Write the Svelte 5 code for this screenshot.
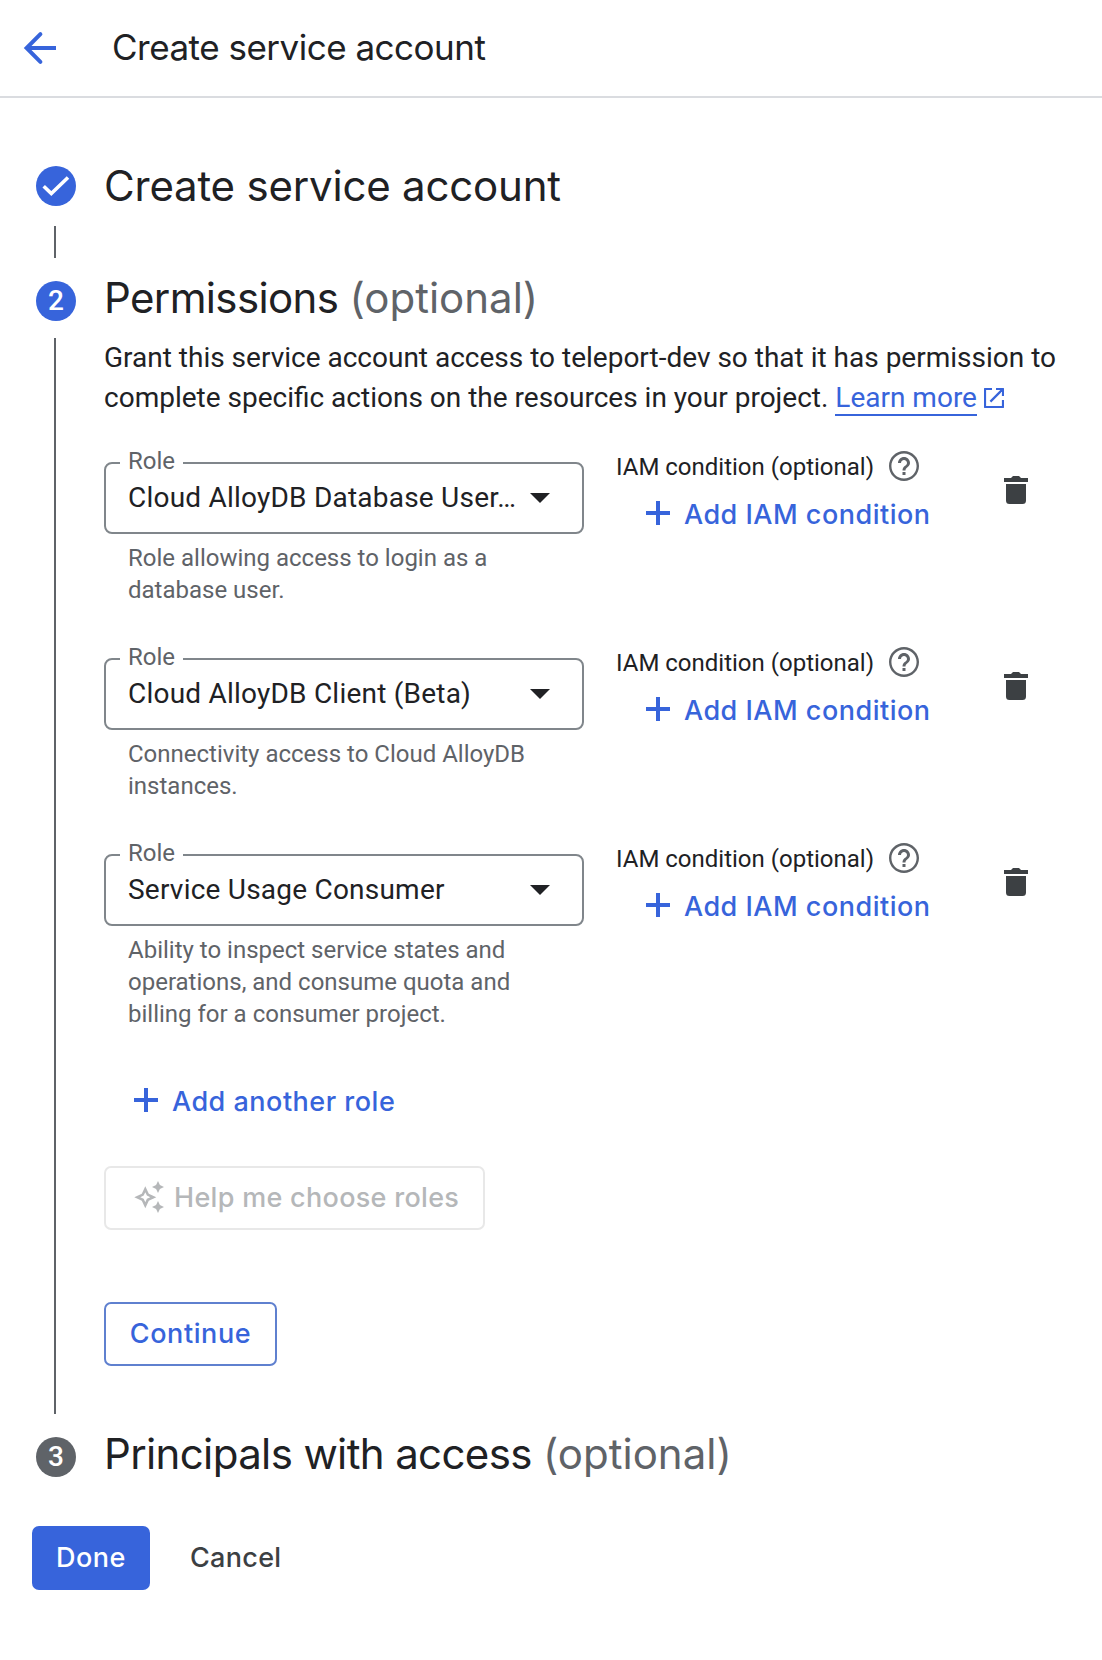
<script>
  const roles = [
    {
      name: 'Cloud AlloyDB Database User…',
      help: ['Role allowing access to login as a', 'database user.']
    },
    {
      name: 'Cloud AlloyDB Client (Beta)',
      help: ['Connectivity access to Cloud AlloyDB', 'instances.']
    },
    {
      name: 'Service Usage Consumer',
      help: [
        'Ability to inspect service states and',
        'operations, and consume quota and',
        'billing for a consumer project.'
      ]
    }
  ];
</script>

{#snippet plus()}
  <svg class="plus" width="24" height="24" viewBox="0 0 24 24" aria-hidden="true">
    <path d="M10 0h4v10h10v4H14v10h-4V14H0v-4h10z" fill="currentColor" />
  </svg>
{/snippet}

<div class="page">
  <header>
    <svg width="48" height="48" viewBox="0 0 24 24" aria-hidden="true">
      <g fill="none" stroke="currentColor" stroke-width="2">
        <path d="M20 12H5.6" />
        <path d="M12.2 5.100 5.300 12l6.900 6.900" stroke-linecap="round" />
      </g>
    </svg>
    <h1>Create service account</h1>
  </header>

  <main>
    <section class="step first">
      <div class="rail">
        <span class="dot">
          <svg width="40" height="40" viewBox="0 0 40 40" aria-hidden="true">
            <path d="M7.700 20.300 15.300 27.500 32 11.500" fill="none" stroke="#fff" stroke-width="3.600" />
          </svg>
        </span>
        <span class="line"></span>
      </div>
      <div class="content"><h2>Create service account</h2></div>
    </section>

    <section class="step second">
      <div class="rail">
        <span class="dot">2</span>
        <span class="line"></span>
      </div>
      <div class="content">
        <h2>Permissions <span class="optional">(optional)</span></h2>
        <p class="intro">
          Grant this service account access to teleport-dev so that it has permission to<br />
          complete specific actions on the resources in your project.
          <a href="#learn">Learn more</a><svg class="external" width="20" height="20" viewBox="0 0 20 20" aria-hidden="true">
            <path d="M8 1H1v18h18v-7M12 1h7v7M18.600 1.400 6.400 13.600" fill="none" stroke="currentColor" stroke-width="2.200" stroke-linejoin="round" />
          </svg>
        </p>

        {#each roles as role}
          <div class="role">
            <div class="field">
              <div class="select">
                <span class="label">Role</span>
                <span class="value">{role.name}</span>
                <svg width="20" height="10" viewBox="0 0 20 10" aria-hidden="true">
                  <path d="M0 0h20L10 10z" fill="currentColor" />
                </svg>
              </div>
              <div class="help">
                {#each role.help as text}<div>{text}</div>{/each}
              </div>
            </div>
            <div class="condition">
              <div class="caption">
                <span>IAM condition (optional)</span>
                <svg width="36" height="36" viewBox="0 0 24 24" aria-hidden="true">
                  <path
                    fill="currentColor"
                    d="M11 18h2v-2h-2v2zm1-16C6.48 2 2 6.48 2 12s4.48 10 10 10 10-4.48 10-10S17.52 2 12 2zm0 18.400c-4.630 0-8.400-3.770-8.400-8.400s3.770-8.400 8.400-8.400 8.400 3.770 8.400 8.400-3.770 8.400-8.400 8.400zm0-14.400c-2.21 0-4 1.79-4 4h2c0-1.1.9-2 2-2s2 .9 2 2c0 2-3 1.75-3 5h2c0-2.25 3-2.5 3-5 0-2.21-1.79-4-4-4z"
                  />
                </svg>
              </div>
              <div class="add">{@render plus()}<span>Add IAM condition</span></div>
            </div>
            <svg class="delete" width="24" height="28" viewBox="0 0 24 28" aria-hidden="true">
              <path
                fill="currentColor"
                d="M0 2h7l2-2h6l2 2h7v4H0zM2 8h20v16.500a3.5 3.5 0 0 1-3.5 3.5h-13A3.5 3.5 0 0 1 2 24.500z"
              />
            </svg>
          </div>
        {/each}

        <div class="add another">{@render plus()}<span>Add another role</span></div>

        <button class="choose" disabled>
          <svg class="sparkle" width="30" height="32" viewBox="0 0 30 32" aria-hidden="true">
            <path
              fill="currentColor"
              fill-rule="evenodd"
              d="M11.300 4.200l3.500 7.500 7.500 3.500-7.500 3.500-3.500 7.500-3.500-7.500-7.500-3.500 7.500-3.500zM11.300 10.200l-1.600 3.400-3.400 1.600 3.400 1.600 1.600 3.400 1.600-3.400 3.400-1.600-3.400-1.600zM24-1l1.900 4.100L30 5l-4.100 1.900L24 11l-1.900-4.100L18 5l4.100-1.900zM24 19l1.900 4.100L30 25l-4.100 1.900L24 31l-1.900-4.100L18 25l4.100-1.900z"
            />
          </svg>
          <span>Help me choose roles</span>
        </button>

        <button class="continue">Continue</button>
      </div>
    </section>

    <section class="step third">
      <div class="rail"><span class="dot gray">3</span></div>
      <div class="content">
        <h2>Principals with access <span class="optional">(optional)</span></h2>
      </div>
    </section>
  </main>

  <footer>
    <button class="done">Done</button>
    <button class="cancel">Cancel</button>
  </footer>
</div>

<style>
  :global(body) {
    background: #fff;
  }
  .page {
    width: 1102px;
    height: 1660px;
    overflow: hidden;
    color: #202124;
    font-family: Roboto, sans-serif;
    box-sizing: border-box;
  }
  svg {
    display: block;
    flex: none;
  }
  header {
    display: flex;
    align-items: center;
    height: 96px;
    padding-left: 16px;
    gap: 48px;
    border-bottom: 2px solid #dadce0;
    color: #3764db;
  }
  h1,
  h2 {
    margin: 0;
    font-family: Inter, sans-serif;
    font-weight: 400;
    color: #202124;
    white-space: nowrap;
  }
  h1 {
    margin-top: -2px;
    font-size: 35px;
    line-height: 48px;
    letter-spacing: -0.5px;
  }
  h2 {
    font-size: 42px;
    line-height: 48px;
    letter-spacing: -0.63px;
  }
  .first h2 {
    letter-spacing: -0.2px;
  }
  .optional {
    color: #5f6368;
    letter-spacing: 0;
  }
  main {
    padding: 68px 0 0 36px;
  }
  .step {
    display: flex;
    gap: 28px;
  }
  .rail {
    display: flex;
    flex-direction: column;
    width: 40px;
    flex: none;
  }
  .dot {
    width: 40px;
    height: 40px;
    border-radius: 50%;
    background: #3764db;
    color: #fff;
    text-align: center;
    font: 500 28px/39px Roboto, sans-serif;
  }
  .dot.gray {
    background: #5f6368;
  }
  .line {
    width: 2px;
    flex: 1;
    margin: 17px 0 23px 18px;
    background: #5f6368;
  }
  .first .rail {
    height: 115px;
  }
  .first .line {
    margin-top: 20px;
  }
  .content {
    flex: 1;
    margin-top: -7px;
  }
  .first .content {
    margin-top: -4px;
  }
  .second .content {
    padding-bottom: 71px;
  }
  .intro {
    margin: 16px 0 44px;
    font-size: 28px;
    line-height: 40px;
    white-space: nowrap;
  }
  a {
    color: #3764db;
    text-decoration: none;
    border-bottom: 2px solid #3764db;
  }
  .external {
    display: inline-block;
    margin-left: 7px;
    vertical-align: -1px;
    color: #3764db;
  }
  .role {
    display: flex;
    margin-bottom: 52px;
  }
  .field {
    width: 480px;
  }
  .select {
    position: relative;
    box-sizing: border-box;
    display: flex;
    align-items: center;
    justify-content: space-between;
    height: 72px;
    padding: 0 32px 0 22px;
    border: 2px solid #80868b;
    border-radius: 8px;
  }
  .label {
    position: absolute;
    left: 14px;
    top: -19px;
    width: 47px;
    padding: 0 8px;
    background: #fff;
    color: #5f6368;
    font-size: 24px;
    line-height: 32px;
  }
  .value {
    font-size: 28px;
    line-height: 40px;
    letter-spacing: 0.22px;
    white-space: nowrap;
  }
  .help {
    padding: 8px 0 0 24px;
    color: #5f6368;
    font-size: 24px;
    line-height: 32px;
    white-space: nowrap;
  }
  .condition {
    width: 356px;
    margin: -14px 0 0 32px;
  }
  .caption {
    display: flex;
    align-items: center;
    gap: 12px;
    height: 36px;
    font-size: 24px;
    white-space: nowrap;
  }
  .caption span {
    width: 258px;
    padding-top: 2px;
    line-height: 38px;
  }
  .caption svg {
    color: #5f6368;
  }
  .add {
    display: flex;
    align-items: center;
    gap: 14px;
    margin: 11px 0 0 30px;
    color: #3764db;
    font: 500 27px/36px Inter, sans-serif;
    letter-spacing: 0.5px;
    white-space: nowrap;
  }
  .add span {
    height: 36px;
    line-height: 39px;
  }
  .delete {
    margin: 14px 0 0 32px;
    color: #3c4043;
  }
  .another {
    margin: 0 0 48px 30px;
  }
  button {
    display: flex;
    align-items: center;
    box-sizing: border-box;
    height: 64px;
    border-radius: 7px;
    background: none;
    font: 500 27px/36px Inter, sans-serif;
    letter-spacing: 0.5px;
    white-space: nowrap;
  }
  .choose {
    width: 381px;
    padding: 0 0 0 28px;
    gap: 10px;
    border: 2px solid #e8e8e8;
    color: #b5b7b9;
    letter-spacing: 0.3px;
  }
  .sparkle {
    overflow: visible;
  }
  .continue {
    width: 173px;
    justify-content: center;
    margin-top: 72px;
    border: 2px solid #5f80cf;
    color: #3764db;
    letter-spacing: 0.6px;
  }
  footer {
    display: flex;
    gap: 40px;
    padding: 48px 0 0 32px;
  }
  .done {
    width: 118px;
    justify-content: center;
    border: 0;
    background: #3764db;
    color: #fff;
  }
  .cancel {
    padding: 0;
    border: 0;
    color: #3c4043;
    letter-spacing: 0.3px;
  }
</style>
